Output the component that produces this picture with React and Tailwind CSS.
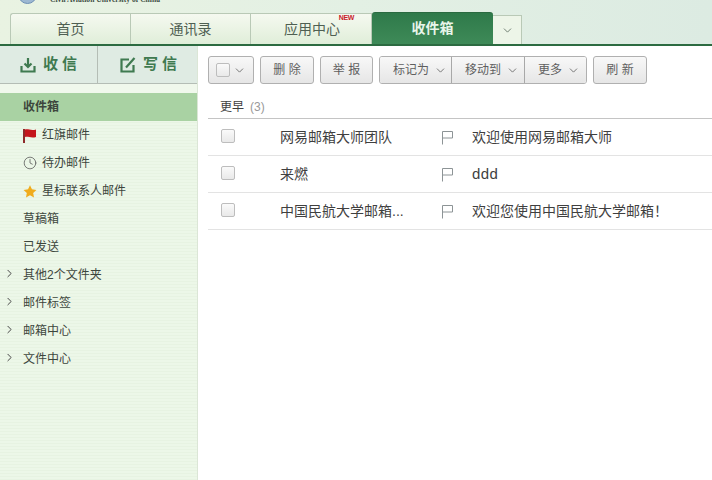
import React from "react";
import { ChevronDown, ChevronRight, Clock } from "lucide-react";

const font = "font-['Liberation_Sans','Noto_Sans_CJK_SC',sans-serif]";

const Flag = () => (
  <svg width="13" height="15" viewBox="0 0 13 15" fill="none" stroke="#8d9496" strokeWidth="1">
    <path d="M1.5 14.5V1.5H11.5V8H1.5" />
  </svg>
);

const RedFlag = () => (
  <svg width="14" height="15" viewBox="0 0 14 15">
    <rect x="0" y="1" width="2" height="14" fill="#8e2a2a" />
    <path d="M2 1.5C5 0.5 8 3 13 1.5V9C8 10.5 5 8 2 9Z" fill="#c4161c" />
  </svg>
);

const Star = () => (
  <svg width="15" height="15" viewBox="0 0 15 15">
    <path d="M7.5 0.8L9.6 5.2L14.4 5.8L10.9 9.1L11.8 14L7.5 11.6L3.2 14L4.1 9.1L0.6 5.8L5.4 5.2Z" fill="#f0ac1c" />
  </svg>
);

// tray with arrow, thicker than the lucide one
const Receive = () => (
  <svg width="16" height="16" viewBox="0 0 16 16" fill="none" stroke="#3f7a50" strokeWidth="2.2">
    <path d="M1.5 9V14.5H14.5V9" />
    <path d="M8 1V10M4.5 6.5L8 10L11.5 6.5" />
  </svg>
);

const Compose = () => (
  <svg width="16" height="16" viewBox="0 0 16 16" fill="none" stroke="#3f7a50" strokeWidth="2.2">
    <path d="M9 2.5H1.5V14.5H13.5V8" />
    <path d="M6 10.5L14.5 1" />
  </svg>
);

const Tab = ({ label, w, children }) => (
  <div className={"relative flex items-center justify-center border-r border-[#b9c9b6] text-[14px] text-[#4f5f52] " + w}>
    {label}
    {children}
  </div>
);

const Btn = ({ children, w }) => (
  <div
    className={
      "flex h-[28px] items-center justify-center rounded-[3px] border border-[#b0b0b0] bg-gradient-to-b from-[#f8f8f8] to-[#e6e6e6] text-[12px] text-[#5f5f5f] " +
      w
    }
  >
    {children}
  </div>
);

const GroupBtn = ({ label, w }) => (
  <div
    className={
      "flex h-[26px] items-center gap-[5px] border-r border-[#a8a8a8] bg-gradient-to-b from-[#f8f8f8] to-[#e6e6e6] pl-[13px] text-[12px] text-[#5f5f5f] last:border-r-0 " +
      w
    }
  >
    {label}
    <Chev />
  </div>
);

const Chev = () => <ChevronDown size={13} strokeWidth={1.6} className="text-[#666]" />;

const Box = ({ size }) => (
  <div className={"rounded-[2px] border border-[#bdbdbd] bg-gradient-to-b from-[#fafafa] to-[#e9e9e9] " + size} />
);

const SideRow = ({ icon, label, arrow, active }) => (
  <div className={"flex h-[28px] items-center text-[12px] text-[#3d463d] " + (active ? "bg-[#a9d2a3] font-bold" : "")}>
    <div className="flex w-[23px] items-center justify-end">
      {arrow && <ChevronRight size={13} strokeWidth={1.8} className="mr-[7px] mt-[-3px] text-[#444]" />}
    </div>
    {icon && <div className="mr-[5px] flex w-[14px] items-center justify-center">{icon}</div>}
    {label}
  </div>
);

const MailRow = ({ from, subject }) => (
  <div className="flex h-[37px] items-center border-b border-[#e3e3e3] text-[14px] text-[#3f3f3f]">
    <div className="ml-[13px] w-[59px]">
      <Box size="h-[14px] w-[14px] mt-[-2px]" />
    </div>
    <div className="w-[161px]">{from}</div>
    <div className="w-[31px]">
      <Flag />
    </div>
    <div>{subject}</div>
  </div>
);

export default function App() {
  return (
    <div className={"flex h-[480px] w-[712px] flex-col overflow-hidden bg-white " + font}>
      <div className="relative h-[46px] shrink-0 border-b-[2px] border-[#2c6b41] bg-gradient-to-r from-[#e9f3e2] via-[#e3f0e4] to-[#dcebe2]">
        <div className="flex h-[13px] items-start overflow-hidden">
          <div className="ml-[18px] mt-[-15px] h-[19px] w-[19px] rounded-full border border-[#6d8fb5] bg-[#9db8d2]" />
          <div className="ml-[13px] mt-[-5px] whitespace-nowrap font-['Liberation_Serif',serif] text-[7.6px] font-bold leading-[9px] text-[#3f4f45]">
            Civil Aviation University of China
          </div>
        </div>
        <div className="ml-[10px] flex h-[31px]">
          <div className="flex rounded-tl-[3px] border-l border-t border-[#b9c9b6] bg-gradient-to-b from-[#f5f9f0] to-[#e0eed9]">
            <Tab label="首页" w="w-[120px]" />
            <Tab label="通讯录" w="w-[120px]" />
            <Tab label="应用中心" w="w-[121px] pl-[2px]">
              <span className="absolute right-[17px] top-[0px] text-[7px] font-bold leading-[8px] tracking-[-0.4px] text-[#c8202a]">NEW</span>
            </Tab>
          </div>
          <div className="mt-[-1px] flex w-[121px] items-center justify-center rounded-t-[3px] border-t border-[#2a6a40] bg-gradient-to-b from-[#2f7a4a] to-[#3e8a58] text-[14px] font-bold text-[#e8f5ea]">
            收件箱
          </div>
          <div className="mt-[2px] flex w-[29px] items-center justify-center border-r border-t border-[#b9c9b6] bg-[#edf5e8]">
            <ChevronDown size={13} strokeWidth={1.6} className="text-[#5f6f62]" />
          </div>
        </div>
      </div>

      <div className="flex min-h-0 flex-1">
        <div className="w-[198px] shrink-0 border-r border-[#dbe6d6] bg-[#e9f5e5] bg-[repeating-linear-gradient(0deg,#e7f3e2_0px,#e7f3e2_1px,#ecf7e8_1px,#ecf7e8_3px)]">
          <div className="flex h-[38px] border-b border-[#b4bdb5] bg-[#dfebe3] text-[15px] font-bold text-[#3f7a50]">
            <div className="flex w-[98px] items-center justify-center gap-[7px] border-r border-[#b4bdb5] pl-[4px]">
              <Receive />
              <span className="tracking-[4px]">收信</span>
            </div>
            <div className="flex flex-1 items-center justify-center gap-[7px] pl-[6px]">
              <Compose />
              <span className="tracking-[4px]">写信</span>
            </div>
          </div>
          <div className="h-[9px] bg-[#f0f8ec]" />
          <SideRow label="收件箱" active />
          <SideRow label="红旗邮件" icon={<RedFlag />} />
          <SideRow label="待办邮件" icon={<Clock size={14} strokeWidth={1.3} className="text-[#555]" />} />
          <SideRow label="星标联系人邮件" icon={<Star />} />
          <SideRow label="草稿箱" />
          <SideRow label="已发送" />
          <SideRow label="其他2个文件夹" arrow />
          <SideRow label="邮件标签" arrow />
          <SideRow label="邮箱中心" arrow />
          <SideRow label="文件中心" arrow />
        </div>

        <div className="min-w-0 flex-1 pl-[10px]">
          <div className="mt-[10px] flex gap-[6px]">
            <Btn w="w-[46px] gap-[3px]">
              <Box size="h-[14px] w-[14px]" />
              <Chev />
            </Btn>
            <Btn w="w-[54px]">删 除</Btn>
            <Btn w="w-[53px]">举 报</Btn>
            <div className="flex overflow-hidden rounded-[3px] border border-[#b0b0b0]">
              <GroupBtn label="标记为" w="w-[72px]" />
              <GroupBtn label="移动到" w="w-[73px]" />
              <GroupBtn label="更多" w="w-[61px]" />
            </div>
            <Btn w="w-[54px]">刷 新</Btn>
          </div>
          <div className="mt-[15px] flex h-[20px] items-start gap-[6px] border-b border-[#c4c4c4] pl-[12px] text-[12px] leading-[16px] text-[#3f3f3f]">
            更早 <span className="text-[#999]">(3)</span>
          </div>
          <MailRow from="网易邮箱大师团队" subject="欢迎使用网易邮箱大师" />
          <MailRow from="来燃" subject={<span className="text-[15px] tracking-[0.4px]">ddd</span>} />
          <MailRow from="中国民航大学邮箱..." subject="欢迎您使用中国民航大学邮箱！" />
        </div>
      </div>
    </div>
  );
}
